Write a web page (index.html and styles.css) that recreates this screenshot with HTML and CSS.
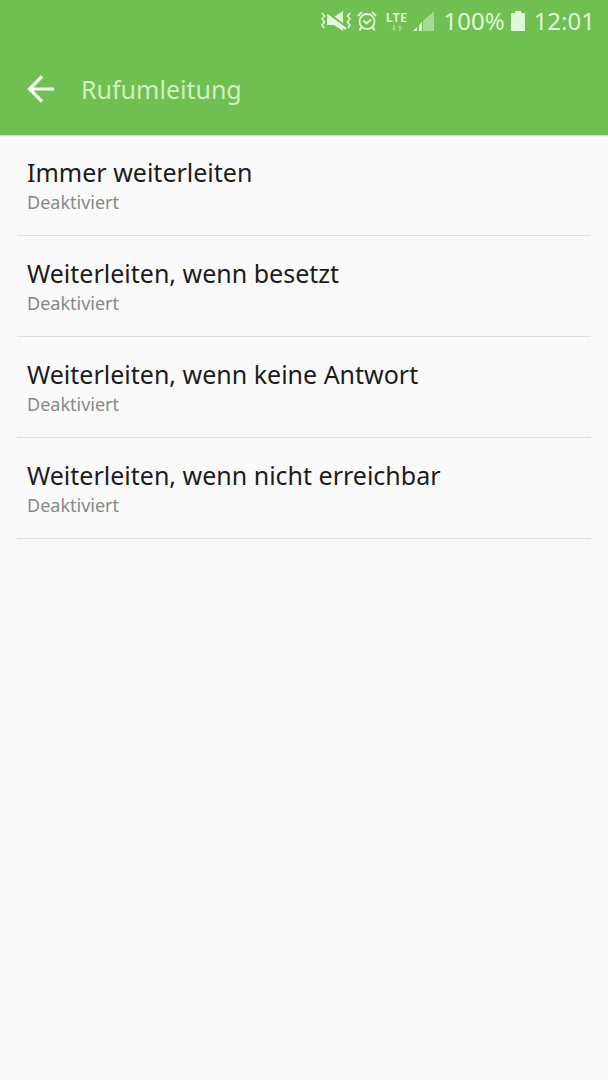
FILE: index.html
```html
<!DOCTYPE html>
<html lang="de">
<head>
<meta charset="utf-8">
<meta name="viewport" content="width=device-width, initial-scale=1">
<title>Rufumleitung</title>
<link rel="stylesheet" href="styles.css">
</head>
<body>
<header class="header">
  <div class="status">
    <svg class="icon-mute" viewBox="0 0 30 20" width="30" height="20" aria-hidden="true">
      <path d="M1 2l2.500 3L1 8l2.500 3L1 14l2 3M29 2l-2.500 3L29 8l-2.500 3L29 14l-2 3" fill="none" stroke="currentColor" stroke-width="1.600"/>
      <path d="M13.500 5.500L22 0v12zM6 6.500h3L22 17v3L13 14H6z" fill="currentColor"/>
      <path d="M6 4l19 14" stroke="currentColor" stroke-width="2.200"/>
    </svg>
    <svg class="icon-alarm" viewBox="0 0 20 20" width="20" height="20" aria-hidden="true">
      <g fill="none" stroke="currentColor" stroke-width="1.800">
        <circle cx="10" cy="10.500" r="7.500"/>
        <path d="M1 5l4-4M19 5l-4-4M4.500 16l-2 3.500M15.500 16l2 3.500M6.500 9.500l3 3 4.500-4"/>
      </g>
    </svg>
    <div class="network">
      <span class="lte">LTE</span>
      <svg class="traffic" viewBox="0 0 12 6" width="12" height="6" aria-hidden="true">
        <path d="M2 0h2v3h2L3 6 0 3h2zM9 0l3 3h-2v3H8V3H6z" fill="currentColor"/>
      </svg>
    </div>
    <svg class="icon-signal" viewBox="0 0 21 20" width="21" height="20" aria-hidden="true">
      <path d="M10 10L21 0v20H10z" fill="currentColor" opacity=".5"/>
      <path d="M0 20l4-4v4zM6 14l3-3v9H6z" fill="currentColor"/>
    </svg>
    <span class="percent">100%</span>
    <svg class="icon-battery" viewBox="0 0 14 20" width="14" height="20" aria-hidden="true">
      <path d="M4 0h6v2h4v18H0V2h4z" fill="currentColor"/>
    </svg>
    <time class="clock">12:01</time>
  </div>
  <div class="toolbar">
    <button class="back" type="button" aria-label="Zurück">
      <svg viewBox="0 0 28 28" width="28" height="28" aria-hidden="true">
        <path d="M27 14H2M15 1.500L2.500 14 15 26.500" fill="none" stroke="currentColor" stroke-width="3.200"/>
      </svg>
    </button>
    <h1 class="title">Rufumleitung</h1>
  </div>
</header>
<main class="list">
  <button class="row" type="button"><span class="name">Immer weiterleiten</span><span class="state">Deaktiviert</span></button>
  <button class="row" type="button"><span class="name">Weiterleiten, wenn besetzt</span><span class="state">Deaktiviert</span></button>
  <button class="row" type="button"><span class="name">Weiterleiten, wenn keine Antwort</span><span class="state">Deaktiviert</span></button>
  <button class="row" type="button"><span class="name">Weiterleiten, wenn nicht erreichbar</span><span class="state">Deaktiviert</span></button>
</main>
</body>
</html>
```
FILE: styles.css
```css
* {
  box-sizing: border-box;
}

body {
  margin: 0;
  background: #fafafa;
  color: #1c1c1c;
  font-family: "Noto Sans", "Open Sans", sans-serif;
}

button {
  margin: 0;
  border: 0;
  background: none;
  color: inherit;
  font: inherit;
}

svg {
  display: block;
  flex: none;
}

.header {
  background: #6fbf52;
  box-shadow: 0 1px 0 #cfdfc8;
}

.status {
  display: flex;
  align-items: center;
  justify-content: flex-end;
  height: 41px;
  padding-right: 13px;
  color: #e0f7d8;
  font-size: 24px;
  line-height: 41px;
}

.icon-alarm {
  margin-left: 6px;
}

.network {
  display: flex;
  flex-direction: column;
  align-items: center;
  gap: 2px;
  width: 24px;
  margin: 0 4px 0 8px;
}

.lte {
  font-size: 13px;
  font-weight: 600;
  line-height: 12px;
}

.traffic {
  opacity: .4;
}

.percent {
  margin: 0 6px 0 10px;
}

.clock {
  margin-left: 9px;
}

.toolbar {
  display: flex;
  align-items: center;
  gap: 26px;
  height: 94px;
  padding: 2px 27px 0;
}

.back {
  padding: 0;
  color: #f8fff5;
}

.title {
  margin: 0;
  color: #cff2c0;
  font-size: 25px;
  font-weight: 400;
  line-height: 34px;
}

.list {
  display: flex;
  flex-direction: column;
  padding: 0 17px;
}

.row {
  display: flex;
  flex-direction: column;
  padding: 20px 10px 20px;
  border-bottom: 1px solid #dedede;
  text-align: left;
}

.name {
  font-size: 25px;
  line-height: 34px;
}

.state {
  color: #888;
  font-size: 18px;
  line-height: 26px;
}
```
